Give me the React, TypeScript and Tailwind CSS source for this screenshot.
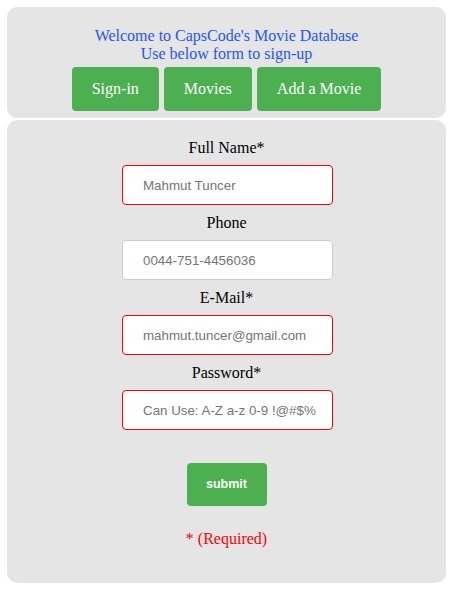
const fields = [
  { label: "Full Name*", placeholder: "Mahmut Tuncer", required: true, type: "text" },
  { label: "Phone", placeholder: "0044-751-4456036", required: false, type: "tel" },
  { label: "E-Mail*", placeholder: "mahmut.tuncer@gmail.com", required: true, type: "email" },
  { label: "Password*", placeholder: "Can Use: A-Z a-z 0-9 !@#$%", required: true, type: "text" },
];

const navButtons = ["Sign-in", "Movies", "Add a Movie"];

export default function App() {
  return (
    <div className="w-[458px] h-[592px] bg-white pt-[7px] pl-[7px] pb-[7px] flex flex-col gap-[2px] font-['Liberation_Serif',serif]">
      <div className="w-[439px] bg-[#e5e5e5] rounded-[10px] pt-[20px] pb-[7px] flex flex-col items-center">
        <p className="text-[16px] leading-[18px] text-[#1f55ff] text-center">
          Welcome to CapsCode's Movie Database
          <br />
          Use below form to sign-up
        </p>
        <div className="flex gap-[5px] mt-[4px]">
          {navButtons.map((b) => (
            <button
              key={b}
              className="h-[44px] px-[20px] min-w-[87px] bg-[#4caf50] text-white text-[16px] rounded-[4px]"
            >
              {b}
            </button>
          ))}
        </div>
      </div>

      <form className="w-[439px] flex-1 bg-[#e5e5e5] rounded-[10px] pt-[19px] mb-[2px] flex flex-col items-center">
        {fields.map((f) => (
          <div key={f.label} className="flex flex-col items-center mb-[9px]">
            <label className="text-[16px] leading-[18px] text-black">{f.label}</label>
            <input
              type={f.type}
              placeholder={f.placeholder}
              className={`mt-[8px] ml-[2px] w-[211px] h-[40px] pl-[20px] pr-[4px] bg-white rounded-[4px] border text-[13.33px] font-['Liberation_Sans',sans-serif] placeholder:text-[#757575] outline-none ${
                f.required ? "border-[#ff0000]" : "border-[#cccccc]"
              }`}
            />
          </div>
        ))}
        <button
          type="button"
          className="mt-[24px] w-[80px] h-[43px] bg-[#4caf50] text-white rounded-[4px] text-[12.5px] font-bold font-['Liberation_Sans',sans-serif]"
        >
          submit
        </button>
        <p className="mt-[24px] text-[16px] leading-[18px] text-[#ff0000]">* (Required)</p>
      </form>
    </div>
  );
}
